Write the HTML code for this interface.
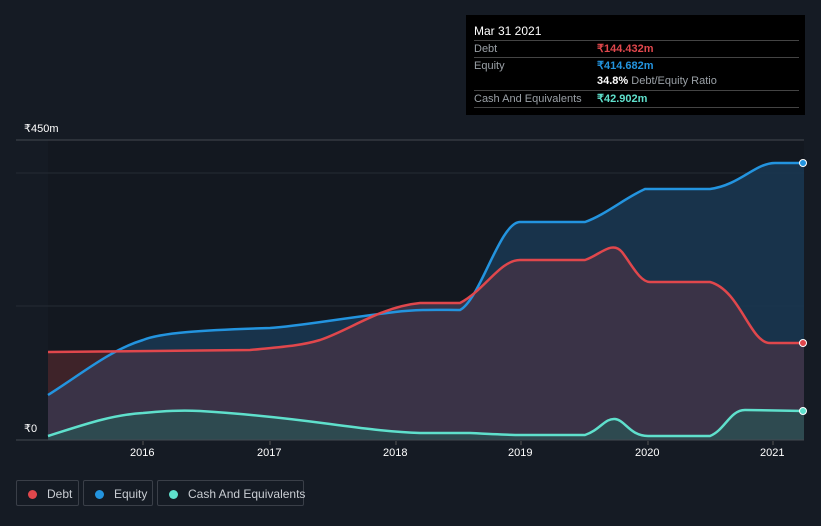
<!DOCTYPE html>
<html><head><style>
body{margin:0;background:#151b24;font-family:"Liberation Sans",sans-serif;}
.wrap{position:relative;width:821px;height:526px;overflow:hidden;background:#151b24}
.tt{position:absolute;left:466px;top:15px;width:339px;height:100px;background:#000;color:#fff;font-size:11px}
.tt .row{position:absolute;left:8px;right:6px;border-top:1px solid #444;height:16px;line-height:16px}
.lab{color:#9aa0a6}
.leg{position:absolute;top:480px;height:26px;border:1px solid #3a3f48;border-radius:2px;color:#c8ccd2;font-size:12px;line-height:26px;box-sizing:border-box;white-space:nowrap}
.dot{display:inline-block;width:9px;height:9px;border-radius:50%;margin:0 10px 0 11px;vertical-align:-1px}
.ax{position:absolute;color:#fff;font-size:11px}
</style></head><body><div class="wrap">
<svg width="821" height="526" style="position:absolute;left:0;top:0">
<rect x="48" y="140" width="756" height="300" fill="#131820"/>
<line x1="16" y1="140" x2="804" y2="140" stroke="#44484f"/>
<line x1="16" y1="173" x2="804" y2="173" stroke="#252b35"/>
<line x1="16" y1="306" x2="804" y2="306" stroke="#252b35"/>
<path d="M48,395 C80,375 110,350 143,340 C160,333 200,330 270,328 C300,326 330,320 395,312 C420,309 440,310 460,310 C480,300 500,222 520,222 L585,222 C605,215 625,198 645,189 L710,189 C740,185 755,163 775,163 L804,163 L804,440 L48,440Z" fill="#1a3650" opacity="0.9"/>
<path d="M48,352 L250,350 C280,347 300,346 320,340 C350,330 380,307 420,303 L460,303 C485,290 500,260 520,260 L585,260 C600,255 612,240 622,252 C632,265 640,282 650,282 L710,282 C740,290 750,343 770,343 L804,343 L804,440 L48,440Z" fill="#3a3347"/>
<path d="M48,352 L118,352 C100,360 70,380 48,395Z" fill="#3e2329"/>
<path d="M48,436 C80,426 110,415 143,413 C165,411 180,410 200,411 C250,414 300,420 330,424 C360,428 390,432 420,433 L470,433 C490,434 510,435 520,435 L585,435 C600,430 605,418 615,419 C625,420 630,436 648,436 L710,436 C725,430 730,410 745,410 L804,411 L804,440 L48,440Z" fill="#2e4a50"/>
<path d="M48,395 C80,375 110,350 143,340 C160,333 200,330 270,328 C300,326 330,320 395,312 C420,309 440,310 460,310 C480,300 500,222 520,222 L585,222 C605,215 625,198 645,189 L710,189 C740,185 755,163 775,163 L804,163" fill="none" stroke="#2394df" stroke-width="2.5"/>
<path d="M48,352 L250,350 C280,347 300,346 320,340 C350,330 380,307 420,303 L460,303 C485,290 500,260 520,260 L585,260 C600,255 612,240 622,252 C632,265 640,282 650,282 L710,282 C740,290 750,343 770,343 L804,343" fill="none" stroke="#e0474c" stroke-width="2.5"/>
<path d="M48,436 C80,426 110,415 143,413 C165,411 180,410 200,411 C250,414 300,420 330,424 C360,428 390,432 420,433 L470,433 C490,434 510,435 520,435 L585,435 C600,430 605,418 615,419 C625,420 630,436 648,436 L710,436 C725,430 730,410 745,410 L804,411" fill="none" stroke="#5fe0cc" stroke-width="2.5"/>
<line x1="16" y1="440" x2="804" y2="440" stroke="#44484f"/>
<g stroke="#555" ><line x1="143" y1="441" x2="143" y2="445"/><line x1="270" y1="441" x2="270" y2="445"/><line x1="396" y1="441" x2="396" y2="445"/><line x1="521" y1="441" x2="521" y2="445"/><line x1="648" y1="441" x2="648" y2="445"/><line x1="773" y1="441" x2="773" y2="445"/></g>
<circle cx="803" cy="163" r="3.5" fill="#2394df" stroke="#fff"/>
<circle cx="803" cy="343" r="3.5" fill="#e0474c" stroke="#fff"/>
<circle cx="803" cy="411" r="3.5" fill="#5fe0cc" stroke="#fff"/>
</svg>
<div class="ax" style="left:24px;top:122px">₹450m</div>
<div class="ax" style="left:24px;top:422px">₹0</div>
<div class="ax" style="left:130px;top:447px">2016</div>
<div class="ax" style="left:257px;top:447px">2017</div>
<div class="ax" style="left:383px;top:447px">2018</div>
<div class="ax" style="left:508px;top:447px">2019</div>
<div class="ax" style="left:635px;top:447px">2020</div>
<div class="ax" style="left:760px;top:447px">2021</div>
<div class="tt">
<div style="position:absolute;left:8px;top:9px;font-size:12px">Mar 31 2021</div>
<div class="row" style="top:25px"><span class="lab">Debt</span><span style="position:absolute;left:123px;color:#e0474c;font-weight:bold">₹144.432m</span></div>
<div class="row" style="top:42px"><span class="lab">Equity</span><span style="position:absolute;left:123px;color:#2394df;font-weight:bold">₹414.682m</span></div>
<div class="row" style="top:58px;border:none"><span style="position:absolute;left:123px"><b>34.8%</b> <span class="lab">Debt/Equity Ratio</span></span></div>
<div class="row" style="top:75px;border-bottom:1px solid #444"><span class="lab">Cash And Equivalents</span><span style="position:absolute;left:123px;color:#5fe0cc;font-weight:bold">₹42.902m</span></div>
</div>
<div class="leg" style="left:16px;width:63px"><span class="dot" style="background:#e0474c"></span>Debt</div>
<div class="leg" style="left:83px;width:70px"><span class="dot" style="background:#2394df"></span>Equity</div>
<div class="leg" style="left:157px;width:147px"><span class="dot" style="background:#5fe0cc"></span>Cash And Equivalents</div>
</div></body></html>
